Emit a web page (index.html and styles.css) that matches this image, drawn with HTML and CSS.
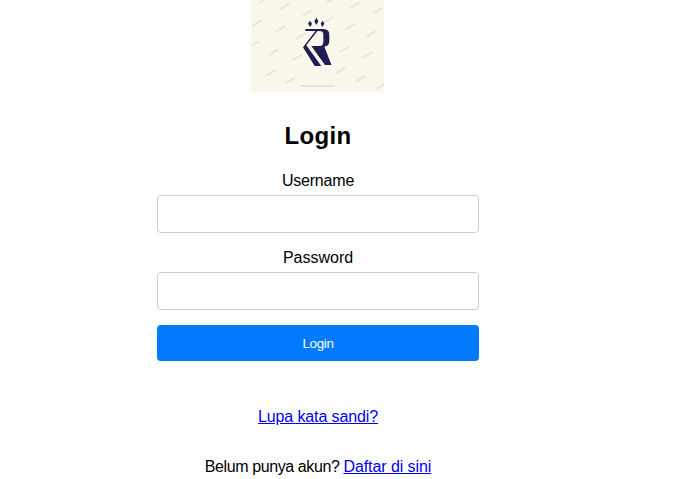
FILE: index.html
```
<!DOCTYPE html>
<html lang="id">
<head>
<meta charset="utf-8">
<title>Login</title>
<link rel="stylesheet" href="styles.css">
</head>
<body>
<main class="login">
  <svg class="logo" viewBox="0 0 399 276" role="img" aria-label="Logo">
    <defs><path id="mark" d="M-17 6L12 -11L17 -6L-12 11Z"/></defs>
    <rect width="399" height="276" fill="#faf8ec"/>
    <g fill="#ebe9df">
      <use href="#mark" x="37" y="1"/><use href="#mark" x="101" y="20"/><use href="#mark" x="19" y="69"/>
      <use href="#mark" x="89" y="86"/><use href="#mark" x="170" y="38"/><use href="#mark" x="12" y="131"/>
      <use href="#mark" x="69" y="156"/><use href="#mark" x="150" y="108"/><use href="#mark" x="139" y="172"/>
      <use href="#mark" x="59" y="218"/><use href="#mark" x="119" y="241"/><use href="#mark" x="311" y="16"/>
      <use href="#mark" x="381" y="32"/><use href="#mark" x="231" y="60"/><use href="#mark" x="299" y="79"/>
      <use href="#mark" x="361" y="102"/><use href="#mark" x="280" y="148"/><use href="#mark" x="349" y="165"/>
      <use href="#mark" x="268" y="212"/><use href="#mark" x="329" y="236"/><use href="#mark" x="241" y="0"/>
      <use href="#mark" x="391" y="258"/>
    </g>
    <g fill="#211d50">
      <path d="M177 62L183 71L178 81L171 71ZM196 53L202 64L196 75L190 64ZM215 62L220 71L214 81L209 71Z"/>
      <path fill-rule="evenodd" d="M163 87H217Q235 88 235 104V124Q235 138 220 140L241 195H222L181 138H207Q217 137 217 125V103Q217 93 205 93H163Z"/>
      <path d="M205 139H218L241 195H222Z"/>
      <path d="M194 92H200L166 136L211 198H191L156 142Z"/>
    </g>
    <path d="M151 258H248" stroke="#dddbd1" stroke-width="4" stroke-dasharray="8 1"/>
  </svg>
  <h2 class="title">Login</h2>
  <form class="form">
    <label class="label label-user" for="user">Username</label>
    <input class="input" id="user" type="text">
    <label class="label" for="pass">Password</label>
    <input class="input" id="pass" type="password">
    <button class="button" type="button">Login</button>
  </form>
  <p class="forgot"><a href="#">Lupa kata sandi?</a></p>
  <p class="register">Belum punya akun? <a href="#">Daftar di sini</a></p>
</main>
</body>
</html>
```
FILE: styles.css
```
* { box-sizing: border-box; }
html { overflow: hidden; }
body {
  margin: 0;
  background: #fff;
  color: #000;
  font: 16px/18px "Liberation Sans", Arial, sans-serif;
}
.login {
  width: 322px;
  margin-left: 157px;
  text-align: center;
}
.logo {
  display: block;
  width: 133px;
  height: 92px;
  margin: 0 auto;
  position: relative;
  left: -0.5px;
}
.title {
  margin: 30px 0 22px;
  font-size: 24px;
  line-height: 28px;
  letter-spacing: 0.3px;
}
.form { display: flex; flex-direction: column; }
.label { margin-bottom: 5px; }
.label-user { letter-spacing: -0.2px; }
.input {
  width: 100%;
  height: 38px;
  margin: 0 0 16px;
  padding: 10px;
  border: 1px solid #ccc;
  border-radius: 4px;
  background: #fff;
}
.input + .button { margin-top: -1px; }
.button {
  height: 36px;
  padding: 0;
  border: 0;
  border-radius: 4px;
  background: #007bff;
  color: #fff;
  font: 13.333px "Liberation Sans", Arial, sans-serif;
  letter-spacing: -0.3px;
}
.forgot { margin: 47px 0 32px; letter-spacing: -0.12px; }
.register { margin: 0; letter-spacing: -0.4px; }
.register a { letter-spacing: -0.08px; }
a { color: #00e; }
```
